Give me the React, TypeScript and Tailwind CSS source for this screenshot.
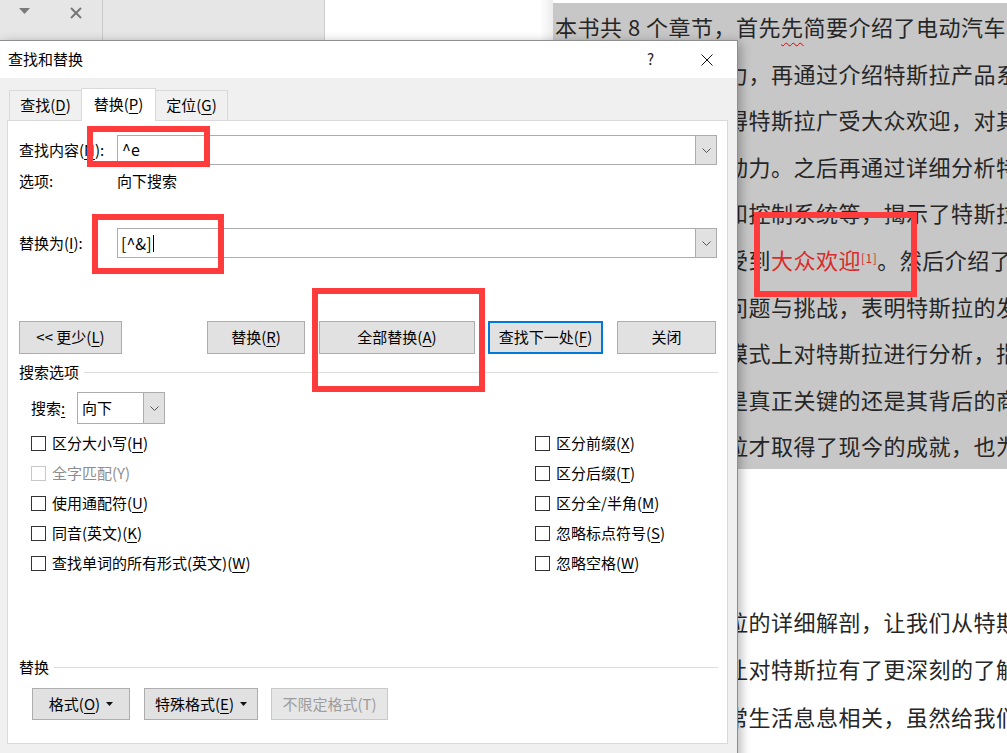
import React from 'react';

const ui = "font-['Noto_Sans_CJK_SC','Microsoft_YaHei',sans-serif]";

// mnemonic letter
const M = ({ c }: { c: string }) => (
    <span className="underline decoration-1 underline-offset-[3px]">{c}</span>
);

const Chevron = () => (
    <svg width="9" height="5" viewBox="0 0 9 5" fill="none">
        <polyline points="0.5,0.5 4.5,4.5 8.5,0.5" stroke="#555" strokeWidth="1" />
    </svg>
);

const Caret = () => (
    <svg width="7" height="4" viewBox="0 0 7 4">
        <polygon points="0,0 7,0 3.5,4" fill="#111" />
    </svg>
);

const Check = ({ label, disabled }: { label: React.ReactNode; disabled?: boolean }) => (
    <div className="flex h-[30px] items-center">
        <span
            className={
                disabled
                    ? 'h-[15px] w-[15px] border border-[#c8c8c8] bg-white'
                    : 'h-[15px] w-[15px] border border-[#333] bg-white'
            }
        />
        <span className={disabled ? 'ml-[6px] text-[15px] text-[#8d8d8d]' : 'ml-[6px] text-[15px] text-black'}>
            {label}
        </span>
    </div>
);

const Section = ({ title }: { title: string }) => (
    <div className="flex h-[20px] items-center">
        <span className="text-[15px] leading-[20px]">{title}</span>
        <span className="ml-[5px] h-px flex-1 bg-[#dcdcdc]" />
    </div>
);

const Line = ({ children, first }: { children: React.ReactNode; first?: boolean }) => (
    <div className={first ? 'h-[46.6px] whitespace-nowrap pl-[2px] leading-[46.6px]' : 'ml-[-7px] h-[46.6px] whitespace-nowrap leading-[46.6px]'}>
        {children}
    </div>
);

const Plain = ({ children }: { children: React.ReactNode }) => (
    <div className="ml-[-7px] h-[47.5px] whitespace-nowrap leading-[47.5px]">{children}</div>
);

export default function App() {
    return (
        <div className={`relative flex h-[753px] w-[1007px] overflow-hidden bg-white ${ui}`}>
            {/* left: nav pane + page margin */}
            <div className="flex w-[553px] shrink-0">
                <div className="flex h-[40px] w-[325px] border-r border-[#cfcfcf] bg-[#e6e6e6]">
                    <div className="flex w-[103px] items-start border-r border-[#cacaca] pt-[8px]">
                        <svg className="ml-[19px]" width="11" height="6" viewBox="0 0 11 6">
                            <polygon points="0,0 11,0 5.5,6" fill="#7a7a7a" />
                        </svg>
                        <svg className="ml-[40px] mt-[-1px]" width="12" height="12" viewBox="0 0 12 12">
                            <line x1="1" y1="1" x2="11" y2="11" stroke="#777" strokeWidth="2" />
                            <line x1="11" y1="1" x2="1" y2="11" stroke="#777" strokeWidth="2" />
                        </svg>
                    </div>
                </div>
                <div className="flex-1" />
                <div className="w-[13px] bg-gradient-to-r from-white to-[#ececec]" />
            </div>

            {/* document */}
            <div className="flex-1 pt-[3px] text-[22px] tracking-[0.5px] text-[#262626]">
                <div className="bg-[#c7c7c7]">
                    <Line first>
                        本书共 8 个章节，首先
                        <span className="underline decoration-[#d00] decoration-wavy decoration-1 underline-offset-[6px]">先</span>
                        简要介绍了电动汽车的
                    </Line>
                    <Line>车的发展历程与动力，再通过介绍特斯拉产品系列</Line>
                    <Line>列，解释了为何使得特斯拉广受大众欢迎，对其</Line>
                    <Line>后续发展提供了推动力。之后再通过详细分析特斯</Line>
                    <Line>斯拉的电池、电机和控制系统等，揭示了特斯拉</Line>
                    <Line>
                        拉的技术优势使其受到<span className="text-[#d92b2b]">大众欢迎</span>
                        <sup className="text-[12px] text-[#d92b2b]">[1]</sup>。然后介绍了特
                    </Line>
                    <Line>特斯拉面临的种种问题与挑战，表明特斯拉的发展</Line>
                    <Line>前途。之后从商业模式上对特斯拉进行分析，指</Line>
                    <Line>出技术固然重要但是真正关键的还是其背后的商</Line>
                    <Line>商业模式使得特斯拉才取得了现今的成就，也为</Line>
                </div>
                <div className="h-[47px]" />
                <div className="ml-[-12px] h-[47px] whitespace-nowrap text-[12px] leading-[47px] text-[#777]">
                    <span className="inline-block w-[180px]" />↵
                </div>
                <div className="mt-[35px]">
                    <Plain>通过本书对于特斯拉的详细解剖，让我们从特斯拉</Plain>
                    <Plain>身上学到很多，也让对特斯拉有了更深刻的了解</Plain>
                    <Plain>电动汽车与我们日常生活息息相关，虽然给我们</Plain>
                    <Plain>带来了一些挑战，但是也带来了更多的机会与希望</Plain>
                </div>
            </div>

            {/* find & replace dialog */}
            <div className="absolute left-[-1px] top-[40px] flex h-[740px] w-[739px] flex-col border border-[#8e8e8e] bg-[#f0f0f0] text-black shadow-[3px_2px_10px_rgba(0,0,0,0.28)]">
                {/* title bar */}
                <div className="flex h-[37px] shrink-0 items-center bg-white pl-[8px] pr-[24px]">
                    <span className="flex-1 text-[15px]">查找和替换</span>
                    <span className="text-[15px] text-[#222]">?</span>
                    <svg className="ml-[47px]" width="12" height="12" viewBox="0 0 12 12">
                        <line x1="0.5" y1="0.5" x2="11.5" y2="11.5" stroke="#111" strokeWidth="1" />
                        <line x1="11.5" y1="0.5" x2="0.5" y2="11.5" stroke="#111" strokeWidth="1" />
                    </svg>
                </div>

                {/* body */}
                <div className="pt-[10px]">
                    {/* tabs */}
                    <div className="flex h-[32px] items-end pl-[9px] text-[15px]">
                        <div className="flex h-[30px] w-[72px] items-center justify-center border-l border-t border-[#d9d9d9]">
                            查找(<M c="D" />)
                        </div>
                        <div className="relative z-10 mb-[-1px] flex h-[33px] w-[75px] items-center justify-center border-x border-t border-[#d9d9d9] bg-white pb-[2px]">
                            替换(<M c="P" />)
                        </div>
                        <div className="flex h-[30px] w-[72px] items-center justify-center border-r border-t border-[#d9d9d9]">
                            定位(<M c="G" />)
                        </div>
                    </div>

                    {/* panel */}
                    <div className="ml-[7px] flex h-[624px] w-[721px] flex-col border border-[#d9d9d9] bg-white pl-[11px] pr-[9px] text-[15px]">
                        <div className="mt-[14px] flex h-[30px] items-center">
                            <span className="w-[98px]">查找内容(<M c="N" />):</span>
                            <div className="flex h-[30px] w-[600px] border border-[#acacac]">
                                <span className="flex-1 pl-[4px] text-[16px] leading-[27px]">^e</span>
                                <span className="flex w-[21px] items-center justify-center border-l border-[#acacac] bg-[#e1e1e1]">
                                    <Chevron />
                                </span>
                            </div>
                        </div>
                        <div className="flex h-[32px] items-center">
                            <span className="w-[98px]">选项:</span>
                            <span>向下搜索</span>
                        </div>
                        <div className="mt-[31px] flex h-[30px] items-center">
                            <span className="w-[98px]">替换为(<M c="I" />):</span>
                            <div className="flex h-[30px] w-[600px] border border-[#acacac]">
                                <span className="flex flex-1 items-center pl-[3px] text-[16px]">
                                    [^&]
                                    <span className="ml-[1px] h-[17px] w-px bg-black" />
                                </span>
                                <span className="flex w-[21px] items-center justify-center border-l border-[#acacac] bg-[#e1e1e1]">
                                    <Chevron />
                                </span>
                            </div>
                        </div>

                        {/* action buttons */}
                        <div className="mt-[63px] flex h-[33px]">
                            <div className="flex w-[103px] items-center justify-center border border-[#adadad] bg-[#e1e1e1]">
                                &lt;&lt; 更少(<M c="L" />)
                            </div>
                            <div className="ml-[85px] flex w-[98px] items-center justify-center border border-[#adadad] bg-[#e1e1e1]">
                                替换(<M c="R" />)
                            </div>
                            <div className="ml-[14px] flex w-[156px] items-center justify-center border border-[#adadad] bg-[#e1e1e1]">
                                全部替换(<M c="A" />)
                            </div>
                            <div className="ml-[13px] flex w-[115px] items-center justify-center border-2 border-[#0078d7] bg-[#e1e1e1]">
                                查找下一处(<M c="F" />)
                            </div>
                            <div className="ml-[14px] flex w-[99px] items-center justify-center border border-[#adadad] bg-[#e1e1e1]">
                                关闭
                            </div>
                        </div>

                        <div className="mt-[8px]">
                            <Section title="搜索选项" />
                        </div>

                        <div className="mt-[10px] flex h-[32px] items-center pl-[12px]">
                            <span className="w-[46px]">搜索<M c=":" /></span>
                            <div className="flex h-[32px] w-[88px] border border-[#acacac]">
                                <span className="flex flex-1 items-center pl-[4px]">向下</span>
                                <span className="flex w-[21px] items-center justify-center border-l border-[#acacac] bg-[#e1e1e1]">
                                    <Chevron />
                                </span>
                            </div>
                        </div>

                        <div className="mt-[4px] flex pl-[12px]">
                            <div className="flex w-[504px] flex-col">
                                <Check label={<>区分大小写(<M c="H" />)</>} />
                                <Check label="全字匹配(Y)" disabled />
                                <Check label={<>使用通配符(<M c="U" />)</>} />
                                <Check label={<>同音(英文)(<M c="K" />)</>} />
                                <Check label={<>查找单词的所有形式(英文)(<M c="W" />)</>} />
                            </div>
                            <div className="flex flex-col">
                                <Check label={<>区分前缀(<M c="X" />)</>} />
                                <Check label={<>区分后缀(<M c="T" />)</>} />
                                <Check label={<>区分全/半角(<M c="M" />)</>} />
                                <Check label={<>忽略标点符号(<M c="S" />)</>} />
                                <Check label={<>忽略空格(<M c="W" />)</>} />
                            </div>
                        </div>

                        <div className="mt-[79px]">
                            <Section title="替换" />
                        </div>

                        <div className="mt-[11px] flex h-[32px] pl-[13px]">
                            <div className="flex w-[98px] items-center justify-center gap-[6px] border border-[#adadad] bg-[#e1e1e1]">
                                <span>格式(<M c="O" />)</span>
                                <Caret />
                            </div>
                            <div className="ml-[14px] flex w-[114px] items-center justify-center gap-[6px] border border-[#adadad] bg-[#e1e1e1]">
                                <span>特殊格式(<M c="E" />)</span>
                                <Caret />
                            </div>
                            <div className="ml-[13px] flex w-[117px] items-center justify-center border border-[#c9c9c9] bg-[#e6e6e6] text-[#9d9d9d]">
                                不限定格式(T)
                            </div>
                        </div>
                    </div>
                </div>
            </div>

            {/* red annotation boxes */}
            <div className="absolute left-[87px] top-[126px] h-[41px] w-[123px] border-[6px] border-[#ff3b3b]" />
            <div className="absolute left-[92px] top-[214px] h-[60px] w-[132px] border-[6px] border-[#ff3b3b]" />
            <div className="absolute left-[312px] top-[288px] h-[104px] w-[173px] border-[6px] border-[#ff3b3b]" />
            <div className="absolute left-[754px] top-[212px] h-[85px] w-[163px] border-[6px] border-[#ff3b3b]" />
        </div>
    );
}
